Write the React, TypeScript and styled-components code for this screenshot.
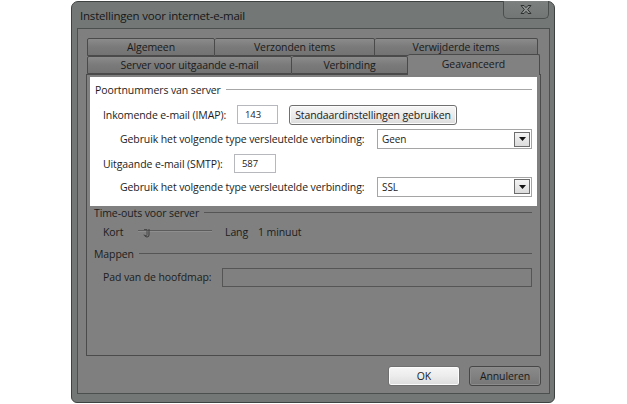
import React from 'react';
import styled, { createGlobalStyle } from 'styled-components';

const GlobalStyle = createGlobalStyle`
  html, body {
    margin: 0;
    padding: 0;
    background: #fff;
  }
  body {
    width: 627px;
    height: 404px;
    overflow: hidden;
    font-family: 'Open Sans', 'Noto Sans', sans-serif;
    font-size: 10.5px;
    letter-spacing: -0.1px;
    color: #1c1c1c;
  }
`;

const Page = styled.div`
  display: flex;
  padding: 1px 0 0 71px;
`;

const Window = styled.div`
  width: 484px;
  height: 402px;
  box-sizing: border-box;
  background: #737876;
  border: 1px solid #3e4241;
  border-radius: 7px 7px 6px 6px;
  display: flex;
  flex-direction: column;
  padding: 0 4px 8px 5px;
`;

const TitleBar = styled.div`
  height: 27px;
  display: flex;
  align-items: flex-start;
  justify-content: space-between;
`;

const TitleText = styled.div`
  padding: 6px 0 0 3px;
  font-size: 11.5px;
  letter-spacing: -0.2px;
  color: #161616;
`;

const CloseButton = styled.div`
  width: 46px;
  height: 18px;
  margin: -1px 1px 0 0;
  box-sizing: border-box;
  border: 1px solid #4a4f4d;
  border-top: none;
  border-radius: 0 0 5px 5px;
  background: linear-gradient(#7c817f, #727775);
  display: flex;
  align-items: center;
  justify-content: center;
`;

const Client = styled.div`
  flex: 1;
  border: 1px solid #4b504e;
  background: #7f7f7f;
  padding: 9px 8px 7px 8px;
  display: flex;
  flex-direction: column;
`;

const TabRows = styled.div`
  height: 36px;
  display: flex;
  flex-direction: column;
  padding-left: 1px;
  position: relative;
  z-index: 1;
`;

const TabRow = styled.div`
  display: flex;
  height: 18px;
`;

const Tab = styled.div<{ $w: number; $active?: boolean }>`
  width: ${(p) => p.$w}px;
  box-sizing: border-box;
  border: 1px solid #4a4a4a;
  border-left-width: 0;
  &:first-child {
    border-left-width: 1px;
  }
  border-bottom: ${(p) => (p.$active ? 'none' : '1px solid #4a4a4a')};
  background: ${(p) =>
    p.$active ? '#818181' : 'linear-gradient(#8b8b8b, #7a7a7a 50%, #737373)'};
  height: ${(p) => (p.$active ? '21px' : '18px')};
  margin-top: ${(p) => (p.$active ? '-2px' : '0')};
  border-radius: 2px 2px 0 0;
  display: flex;
  align-items: ${(p) => (p.$active ? 'flex-start' : 'center')};
  padding-top: ${(p) => (p.$active ? '1px' : '0')};
  justify-content: center;
  line-height: 16px;
  color: #1a1a1a;
`;

const Panel = styled.div`
  height: 282px;
  box-sizing: border-box;
  border: 1px solid #4b4b4b;
  background: #808080;
  padding: 2px 3px 0 3px;
  display: flex;
  flex-direction: column;
`;

const Highlight = styled.div`
  background: #fff;
  height: 129px;
  display: flex;
  flex-direction: column;
`;

const Row = styled.div<{ $h: number; $indent: number }>`
  height: ${(p) => p.$h}px;
  display: flex;
  align-items: center;
  padding-left: ${(p) => p.$indent}px;
  flex-shrink: 0;
`;

const GroupTitle = styled.span<{ $line: string }>`
  white-space: nowrap;
  display: flex;
  align-items: center;
  flex: 1;
  margin-right: 5px;
  &::after {
    content: '';
    flex: 1;
    height: 1px;
    margin-left: 5px;
    margin-top: -1px;
    background: ${(p) => p.$line};
  }
`;

const Label = styled.span<{ $w: number }>`
  width: ${(p) => p.$w}px;
  flex-shrink: 0;
  white-space: nowrap;
`;

const TextInput = styled.div<{ $w: number; $dim?: boolean }>`
  width: ${(p) => p.$w}px;
  height: 19px;
  box-sizing: border-box;
  border: 1px solid ${(p) => (p.$dim ? '#555' : '#b6b8bd')};
  background: ${(p) => (p.$dim ? '#808080' : '#fff')};
  font-size: 9.5px;
  padding-left: 7px;
  line-height: 17px;
`;

const Button = styled.div<{ $w: number; $light?: boolean }>`
  width: ${(p) => p.$w}px;
  height: 20px;
  box-sizing: border-box;
  border: 1px solid ${(p) => (p.$light ? '#707070' : '#474747')};
  border-radius: 3px;
  background: ${(p) =>
    p.$light
      ? 'linear-gradient(#f6f6f6, #ececec 50%, #dcdcdc)'
      : 'linear-gradient(#8a8a8a, #818181 50%, #767676)'};
  box-shadow: inset 0 0 0 1px ${(p) => (p.$light ? '#fcfcfc' : '#8c8c8c')};
  display: flex;
  align-items: center;
  justify-content: center;
  white-space: nowrap;
  color: #1a1a1a;
`;

const Select = styled.div`
  width: 155px;
  height: 20px;
  box-sizing: border-box;
  border: 1px solid #a5a5a5;
  background: #fff;
  display: flex;
  align-items: center;
  justify-content: space-between;
  padding: 0 1px 0 4px;
  font-size: 10px;
`;

const DropButton = styled.div`
  width: 16px;
  height: 15px;
  box-sizing: border-box;
  border: 1px solid #6d6d6d;
  background: linear-gradient(#f4f4f4, #dcdcdc);
  display: flex;
  align-items: center;
  justify-content: center;
`;

const Footer = styled.div`
  display: flex;
  justify-content: flex-end;
  gap: 9px;
  margin-top: 10px;
`;

const tabsTop = [
  { label: 'Algemeen', w: 128 },
  { label: 'Verzonden items', w: 160 },
  { label: 'Verwijderde items', w: 163 },
];

const tabsBottom = [
  { label: 'Server voor uitgaande e-mail', w: 205 },
  { label: 'Verbinding', w: 116 },
  { label: 'Geavanceerd', w: 132, active: true },
];

const Arrow = () => (
  <DropButton>
    <svg width="7" height="4" viewBox="0 0 7 4">
      <path d="M0 0h7L3.5 4z" fill="#111" />
    </svg>
  </DropButton>
);

const Slider = () => (
  <svg width="87" height="12" viewBox="0 0 87 12">
    <path d="M0 4.5h74" stroke="#5c5c5c" strokeWidth="1" />
    <path d="M0 5.5h74" stroke="#8e8e8e" strokeWidth="1" />
    <path d="M6 3.5h3v5a1.5 1.5 0 0 1 -3 0" fill="none" stroke="#4a4a4a" strokeWidth="1" />
    <path d="M11 3v6a2 2 0 0 1 -4 0" fill="none" stroke="#3a3a3a" strokeWidth="1" />
  </svg>
);

export default function App() {
  return (
    <>
      <GlobalStyle />
      <Page>
        <Window>
          <TitleBar>
            <TitleText>Instellingen voor internet-e-mail</TitleText>
            <CloseButton>
              <svg width="14" height="11" viewBox="0 0 14 11">
                <path
                  d="M2 1.5h3l2 2.2 2-2.2h3L8.7 5.5 12 9.5H9L7 7.3 5 9.5H2l3.3-4z"
                  fill="#8c918f"
                  stroke="#2e3130"
                  strokeWidth="1"
                  strokeLinejoin="round"
                />
              </svg>
            </CloseButton>
          </TitleBar>
          <Client>
            <TabRows>
              <TabRow>
                {tabsTop.map((t) => (
                  <Tab key={t.label} $w={t.w}>
                    {t.label}
                  </Tab>
                ))}
              </TabRow>
              <TabRow>
                {tabsBottom.map((t) => (
                  <Tab key={t.label} $w={t.w} $active={t.active}>
                    {t.label}
                  </Tab>
                ))}
              </TabRow>
            </TabRows>
            <Panel>
              <Highlight>
                <Row $h={26} $indent={5}>
                  <GroupTitle $line="#a7a7a7">Poortnummers van server</GroupTitle>
                </Row>
                <Row $h={23} $indent={13}>
                  <Label $w={134}>Inkomende e-mail (IMAP):</Label>
                  <TextInput $w={41}>143</TextInput>
                  <Button $w={168} $light style={{ marginLeft: 11 }}>
                    Standaardinstellingen gebruiken
                  </Button>
                </Row>
                <Row $h={26} $indent={30}>
                  <Label $w={257}>Gebruik het volgende type versleutelde verbinding:</Label>
                  <Select>
                    Geen
                    <Arrow />
                  </Select>
                </Row>
                <Row $h={23} $indent={13}>
                  <Label $w={131}>Uitgaande e-mail (SMTP):</Label>
                  <TextInput $w={42}>587</TextInput>
                </Row>
                <Row $h={23} $indent={30}>
                  <Label $w={257}>Gebruik het volgende type versleutelde verbinding:</Label>
                  <Select>
                    SSL
                    <Arrow />
                  </Select>
                </Row>
              </Highlight>
              <Row $h={14} $indent={4}>
                <GroupTitle $line="#555">Time-outs voor server</GroupTitle>
              </Row>
              <Row $h={24} $indent={13}>
                <Label $w={35}>Kort</Label>
                <Slider />
                <Label $w={33}>Lang</Label>
                <span>1 minuut</span>
              </Row>
              <Row $h={20} $indent={4}>
                <GroupTitle $line="#555">Mappen</GroupTitle>
              </Row>
              <Row $h={26} $indent={13}>
                <Label $w={119}>Pad van de hoofdmap:</Label>
                <TextInput $w={310} $dim />
              </Row>
            </Panel>
            <Footer>
              <Button $w={72} $light>
                OK
              </Button>
              <Button $w={72}>Annuleren</Button>
            </Footer>
          </Client>
        </Window>
      </Page>
    </>
  );
}
